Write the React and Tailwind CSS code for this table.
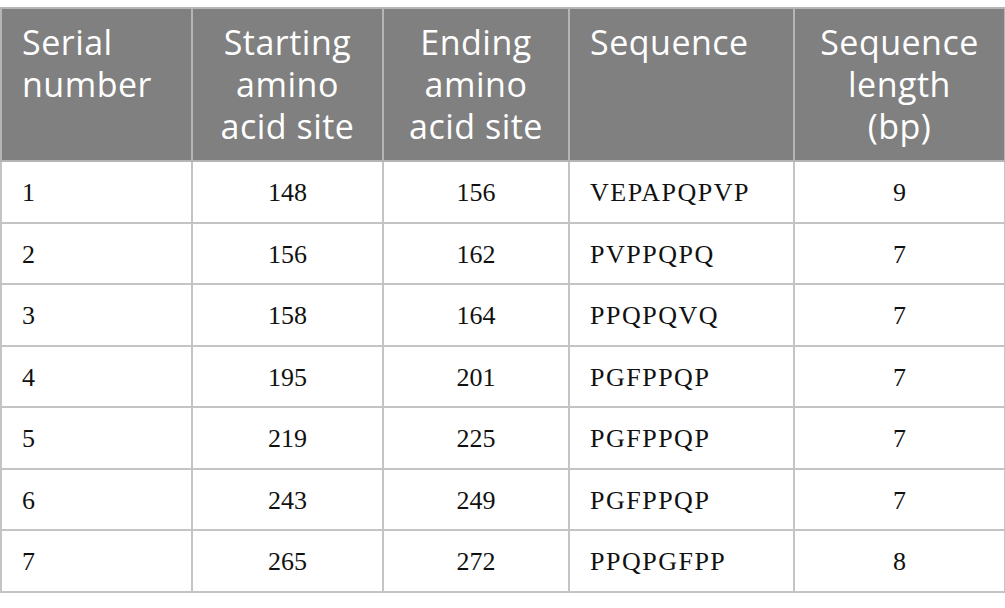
export default function App() {
  const rows = [
    ["1", "148", "156", "VEPAPQPVP", "9"],
    ["2", "156", "162", "PVPPQPQ", "7"],
    ["3", "158", "164", "PPQPQVQ", "7"],
    ["4", "195", "201", "PGFPPQP", "7"],
    ["5", "219", "225", "PGFPPQP", "7"],
    ["6", "243", "249", "PGFPPQP", "7"],
    ["7", "265", "272", "PPQPGFPP", "8"],
  ];
  const th = "border-2 border-[#b5b5b5] align-top px-[20px] pt-[12px] font-normal";
  const td = "border-2 border-[#c4c4c4] px-[20px] pt-[2px] align-middle";
  return (
    <div className="w-[1005px] h-[608px] bg-white pt-[7px]">
      <table className="w-[1004px] border-collapse table-fixed">
        <colgroup>
          <col className="w-[191px]" />
          <col className="w-[191px]" />
          <col className="w-[186px]" />
          <col className="w-[225px]" />
          <col className="w-[211px]" />
        </colgroup>
        <thead>
          <tr className="h-[153px] bg-[#808080] text-white text-[34px] tracking-[0.5px] leading-[42px] font-['Open_Sans',sans-serif]">
            <th className={th + " text-left"}>Serial<br />number</th>
            <th className={th + " text-center"}>Starting<br />amino<br />acid site</th>
            <th className={th + " text-center"}>Ending<br />amino<br />acid site</th>
            <th className={th + " text-left"}>Sequence</th>
            <th className={th + " text-center"}>Sequence<br />length<br />(bp)</th>
          </tr>
        </thead>
        <tbody className="font-['Liberation_Serif',serif] text-[26px] text-[#111111]">
          {rows.map((r, i) => (
            <tr key={i} className="h-[61.5px]">
              <td className={td + " text-left"}>{r[0]}</td>
              <td className={td + " text-center"}>{r[1]}</td>
              <td className={td + " text-center"}>{r[2]}</td>
              <td className={td + " text-left tracking-[1.5px]"}>{r[3]}</td>
              <td className={td + " text-center"}>{r[4]}</td>
            </tr>
          ))}
        </tbody>
      </table>
    </div>
  );
}
